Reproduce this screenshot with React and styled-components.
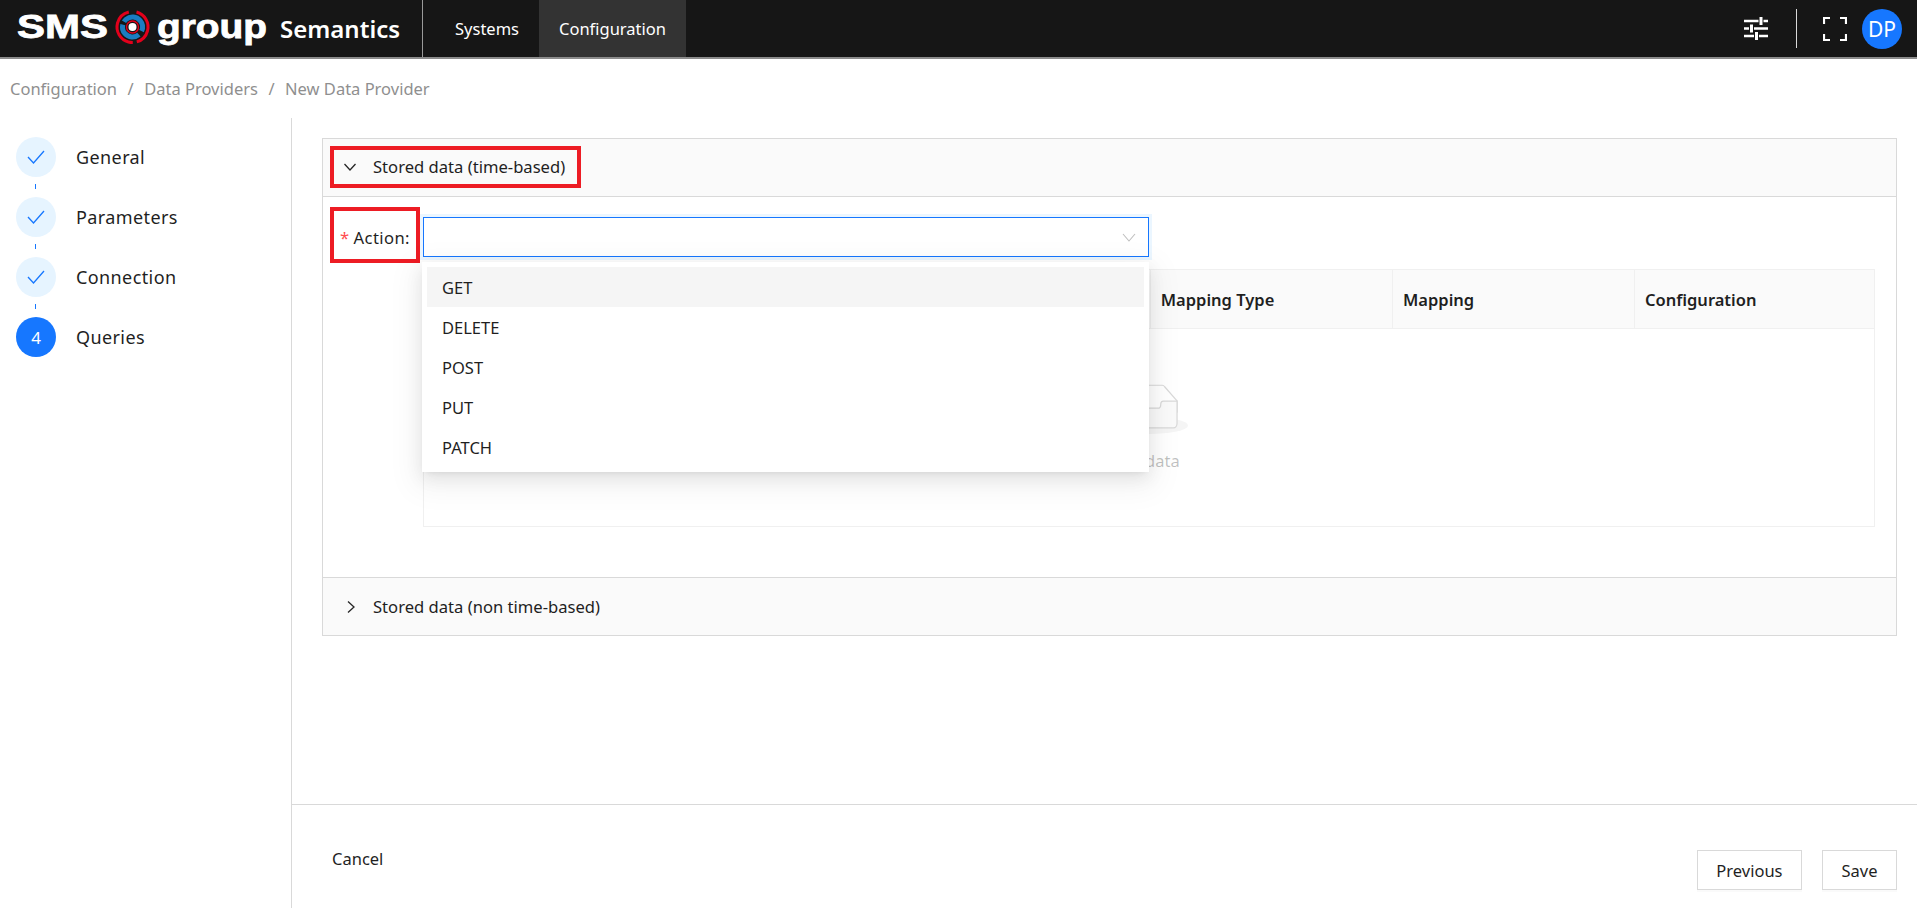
import React from 'react';
import styled, { createGlobalStyle } from 'styled-components';

const steps = [
  { title: 'General', done: true },
  { title: 'Parameters', done: true },
  { title: 'Connection', done: true },
  { title: 'Queries', number: 4 },
];
const actions = ['GET', 'DELETE', 'POST', 'PUT', 'PATCH'];
const columns = ['', '', '', 'Mapping Type', 'Mapping', 'Configuration'];

const App = () => (
  <>
    <GlobalStyle />
    <Page>
      <Header>
        <Brand>
          <LogoArt />
          <ProductName>Semantics</ProductName>
        </Brand>
        <Nav>
          <NavTab>Systems</NavTab>
          <NavTab $active>Configuration</NavTab>
        </Nav>
        <HeaderTools>
          <ToolIcon>
            <svg width="24" height="24" viewBox="0 0 24 24" fill="none" stroke="#fff">
              <path strokeWidth="2.400" d="M0 4h14.500M19.500 4H24M0 11.500h5M10 11.500h14M0 19h10M15 19h9" />
              <path strokeWidth="3" d="M17 0v8M7.500 7.500v8M12.500 15v8" />
            </svg>
          </ToolIcon>
          <ToolDivider />
          <ToolIcon>
            <svg width="24" height="24" viewBox="0 0 24 24" fill="none" stroke="#fff" strokeWidth="2.200">
              <path d="M1 7V1h6M17 1h6v6M23 17v6h-6M7 23H1v-6" />
            </svg>
          </ToolIcon>
          <Avatar>DP</Avatar>
        </HeaderTools>
      </Header>

      <Breadcrumb>
        <span>Configuration</span>
        <CrumbSeparator>/</CrumbSeparator>
        <span>Data Providers</span>
        <CrumbSeparator>/</CrumbSeparator>
        <span>New Data Provider</span>
      </Breadcrumb>

      <Body>
        <Sidebar>
          {steps.map((step, index) => (
            <React.Fragment key={step.title}>
              {index > 0 && <StepLine />}
              <Step>
                <StepCircle $done={step.done}>
                  {step.done ? (
                    <svg width="18" height="14" viewBox="0 0 18 14" fill="none" stroke="#1677ff" strokeWidth="1.300">
                      <path d="M1 7l5.500 6L17 1" />
                    </svg>
                  ) : (
                    step.number
                  )}
                </StepCircle>
                <StepTitle>{step.title}</StepTitle>
              </Step>
            </React.Fragment>
          ))}
        </Sidebar>

        <Main>
          <Content>
            <Collapse>
              <CollapseHeader>
                <MarkedHeader>
                  <svg width="12" height="8" viewBox="0 0 12 8" fill="none" stroke="#262626" strokeWidth="1.300">
                    <path d="M.5 1l5.500 6 5.500-6" />
                  </svg>
                  <span>Stored data (time-based)</span>
                </MarkedHeader>
              </CollapseHeader>

              <CollapseBody>
                <ActionRow>
                  <MarkedLabel>
                    <Required>*</Required>
                    Action:
                  </MarkedLabel>
                  <SelectWrap>
                    <SelectBox>
                      <svg width="14" height="9" viewBox="0 0 14 9" fill="none" stroke="#bfbfbf" strokeWidth="1.100">
                        <path d="M1 1l6 7 6-7" />
                      </svg>
                    </SelectBox>
                    <Dropdown>
                      {actions.map((action, index) => (
                        <Option key={action} $active={index === 0}>
                          {action}
                        </Option>
                      ))}
                    </Dropdown>
                  </SelectWrap>
                </ActionRow>

                <Table>
                  <TableHead>
                    {columns.map((column, index) => (
                      <HeadCell key={index}>{column}</HeadCell>
                    ))}
                  </TableHead>
                  <EmptyBody>
                    <svg width="78" height="50" viewBox="0 0 64 41">
                      <g transform="translate(0 1)" fill="none" fillRule="evenodd">
                        <ellipse fill="#f5f5f5" cx="32" cy="33" rx="32" ry="7" />
                        <g fillRule="nonzero" stroke="#d9d9d9">
                          <path d="M55 12.760L44.854 1.258C44.367.474 43.656 0 42.907 0H21.093c-.749 0-1.460.474-1.947 1.257L9 12.761V22h46v-9.240z" />
                          <path
                            d="M41.613 15.931c0-1.605.994-2.930 2.227-2.931H55v18.137C55 33.260 53.680 35 52.050 35h-40.100C10.320 35 9 33.259 9 31.137V13h11.160c1.233 0 2.227 1.323 2.227 2.928v.022c0 1.605 1.005 2.901 2.237 2.901h14.752c1.232 0 2.237-1.308 2.237-2.913v-.007z"
                            fill="#fafafa"
                          />
                        </g>
                      </g>
                    </svg>
                    <EmptyText>No data</EmptyText>
                  </EmptyBody>
                </Table>
              </CollapseBody>

              <CollapseHeader $last>
                <PlainHeader>
                  <svg width="8" height="12" viewBox="0 0 8 12" fill="none" stroke="#262626" strokeWidth="1.300">
                    <path d="M1 .5l6 5.500-6 5.500" />
                  </svg>
                  <span>Stored data (non time-based)</span>
                </PlainHeader>
              </CollapseHeader>
            </Collapse>
          </Content>

          <Footer>
            <CancelLink>Cancel</CancelLink>
            <FooterActions>
              <OutlineButton>Previous</OutlineButton>
              <OutlineButton>Save</OutlineButton>
            </FooterActions>
          </Footer>
        </Main>
      </Body>
    </Page>
  </>
);

const LogoArt = () => (
  <svg width="275" height="57" viewBox="0 0 275 57">
    <text x="17" y="38" fill="#fff" fontFamily="Liberation Sans" fontWeight="700" fontSize="33" stroke="#fff" strokeWidth=".8" textLength="91" lengthAdjust="spacingAndGlyphs">SMS</text>
    <g fill="none">
      <circle cx="132.500" cy="27" r="15.500" stroke="#e3001b" strokeWidth="3" strokeDasharray="40 4 45 8.400" transform="rotate(-75 132.500 27)" />
      <circle cx="132.500" cy="27" r="10" stroke="#1a7cc1" strokeWidth="5" strokeDasharray="25 3 30 4.800" transform="rotate(50 132.500 27)" />
      <circle cx="132.500" cy="27" r="6" stroke="#e3001b" strokeWidth="1.400" />
      <circle cx="132.500" cy="27" r="4" fill="#fff" />
    </g>
    <text x="157" y="38" fill="#fff" fontFamily="Liberation Sans" fontWeight="700" fontSize="33" stroke="#fff" strokeWidth=".8" textLength="110" lengthAdjust="spacingAndGlyphs">group</text>
  </svg>
);

const GlobalStyle = createGlobalStyle`
  html, body {
    margin: 0;
    padding: 0;
    background: #fff;
  }
  body {
    font-family: "Noto Sans", "Open Sans", sans-serif;
    color: #1f1f1f;
  }
  * {
    box-sizing: border-box;
  }
`;

const Page = styled.div`
  display: flex;
  flex-direction: column;
  width: 1917px;
  height: 908px;
  overflow: hidden;
`;

const Header = styled.header`
  display: flex;
  align-items: stretch;
  flex: 0 0 59px;
  background: #161616;
  border-bottom: 2px solid #8c8c8c;
`;

const Brand = styled.div`
  position: relative;
  display: flex;
  width: 423px;
  border-right: 1px solid #9a9a9a;
`;

const ProductName = styled.span`
  position: absolute;
  left: 280px;
  top: 13px;
  color: #fff;
  font-size: 24px;
  font-weight: 600;
  line-height: 32px;
`;

const Nav = styled.nav`
  display: flex;
  margin-left: 12px;
`;

const NavTab = styled.div`
  display: flex;
  align-items: center;
  padding: 0 20px;
  height: 57px;
  color: #fff;
  font-size: 16.500px;
  background: ${(props) => (props.$active ? '#333333' : 'transparent')};
`;

const HeaderTools = styled.div`
  display: flex;
  align-items: center;
  margin-left: auto;
  padding-right: 15px;
`;

const ToolIcon = styled.div`
  display: flex;
  align-items: center;
`;

const ToolDivider = styled.div`
  width: 1px;
  height: 39px;
  margin: 0 26px 0 28px;
  background: #d9d9d9;
`;

const Avatar = styled.div`
  display: flex;
  align-items: center;
  justify-content: center;
  width: 40px;
  height: 40px;
  margin-left: 15px;
  border-radius: 50%;
  background: #1677ff;
  color: #fff;
  font-size: 21px;
`;

const Breadcrumb = styled.div`
  display: flex;
  align-items: center;
  flex: 0 0 59px;
  padding-left: 10px;
  color: #8f8f8f;
  font-size: 16.500px;
`;

const CrumbSeparator = styled.span`
  margin: 0 10.500px;
`;

const Body = styled.div`
  display: flex;
  flex: 1;
  min-height: 0;
`;

const Sidebar = styled.aside`
  flex: 0 0 292px;
  padding: 19px 0 0 16px;
  border-right: 1px solid #d9d9d9;
`;

const Step = styled.div`
  display: flex;
  align-items: center;
  gap: 20px;
`;

const StepCircle = styled.div`
  display: flex;
  align-items: center;
  justify-content: center;
  width: 40px;
  height: 40px;
  border-radius: 50%;
  background: ${(props) => (props.$done ? '#e6f4ff' : '#1677ff')};
  color: #fff;
  font-size: 17px;
`;

const StepTitle = styled.span`
  font-size: 18px;
  letter-spacing: 0.4px;
  color: #1f1f1f;
`;

const StepLine = styled.div`
  width: 1px;
  height: 5px;
  margin: 7px 0 8px 19px;
  background: #1677ff;
`;

const Main = styled.main`
  display: flex;
  flex-direction: column;
  flex: 1;
  min-width: 0;
`;

const Content = styled.div`
  flex: 1;
  padding: 20px 20px 0 30px;
`;

const Collapse = styled.section`
  border: 1px solid #d9d9d9;
`;

const CollapseHeader = styled.div`
  display: flex;
  align-items: center;
  height: 58px;
  padding-left: 7px;
  background: #fafafa;
  ${(props) => (props.$last ? 'border-top: 1px solid #d9d9d9;' : 'border-bottom: 1px solid #d9d9d9;')}
`;

const MarkedHeader = styled.div`
  display: flex;
  align-items: center;
  gap: 17px;
  height: 42px;
  margin-top: -2px;
  padding: 0 12px 0 10px;
  border: 4px solid #ed1c24;
  font-size: 16.600px;
`;

const PlainHeader = styled.div`
  display: flex;
  align-items: center;
  gap: 18px;
  padding-left: 17px;
  font-size: 16.600px;
`;

const CollapseBody = styled.div`
  padding: 10px 21px 50px 7px;
  background: #fff;
`;

const ActionRow = styled.div`
  display: flex;
  align-items: flex-start;
`;

const MarkedLabel = styled.label`
  display: flex;
  align-items: center;
  justify-content: center;
  width: 90px;
  height: 56px;
  padding-top: 4px;
  border: 4px solid #ed1c24;
  font-size: 16.600px;
  letter-spacing: 0.4px;
`;

const Required = styled.span`
  margin-right: 4px;
  color: #ff4d4f;
`;

const SelectWrap = styled.div`
  position: relative;
  width: 726px;
  margin: 10px 0 0 3px;
`;

const SelectBox = styled.div`
  display: flex;
  align-items: center;
  justify-content: flex-end;
  height: 40px;
  padding-right: 12px;
  border: 1px solid #1677ff;
  box-shadow: 0 0 0 3px rgba(5, 145, 255, 0.08);
`;

const Dropdown = styled.div`
  position: absolute;
  top: 45px;
  left: -1px;
  right: 0;
  z-index: 5;
  height: 210px;
  padding: 5px;
  background: #fff;
  box-shadow: 0 6px 16px rgba(0, 0, 0, 0.08), 0 3px 6px -4px rgba(0, 0, 0, 0.12), 0 9px 28px 8px rgba(0, 0, 0, 0.05);
`;

const Option = styled.div`
  display: flex;
  align-items: center;
  height: 40px;
  padding-left: 15px;
  font-size: 16.500px;
  background: ${(props) => (props.$active ? '#f5f5f5' : 'transparent')};
`;

const Table = styled.div`
  margin: 6px 0 0 93px;
  border: 1px solid #f0f0f0;
`;

const TableHead = styled.div`
  display: grid;
  grid-template-columns: repeat(4, 1fr) 242px 239px;
  height: 59px;
  background: #fafafa;
  border-bottom: 1px solid #f0f0f0;
`;

const HeadCell = styled.div`
  display: flex;
  align-items: center;
  padding-left: 10px;
  border-right: 1px solid #f0f0f0;
  font-size: 16.500px;
  font-weight: 600;
  &:last-child {
    border-right: none;
  }
`;

const EmptyBody = styled.div`
  display: flex;
  flex-direction: column;
  align-items: center;
  height: 197px;
  padding-top: 55px;
`;

const EmptyText = styled.div`
  margin-top: 15px;
  color: rgba(0, 0, 0, 0.25);
  font-size: 16.500px;
`;

const Footer = styled.footer`
  display: flex;
  flex: 0 0 104px;
  justify-content: space-between;
  padding: 45px 20px 0 40px;
  border-top: 1px solid #d9d9d9;
`;

const CancelLink = styled.span`
  font-size: 16.500px;
  line-height: 22px;
  margin-top: -2px;
`;

const FooterActions = styled.div`
  display: flex;
  gap: 20px;
  height: 40px;
`;

const OutlineButton = styled.button`
  padding: 0 18.500px;
  background: #fff;
  border: 1px solid #d9d9d9;
  box-shadow: 0 2px 0 rgba(0, 0, 0, 0.02);
  font: inherit;
  font-size: 16.500px;
  color: #1f1f1f;
`;

export default App;
